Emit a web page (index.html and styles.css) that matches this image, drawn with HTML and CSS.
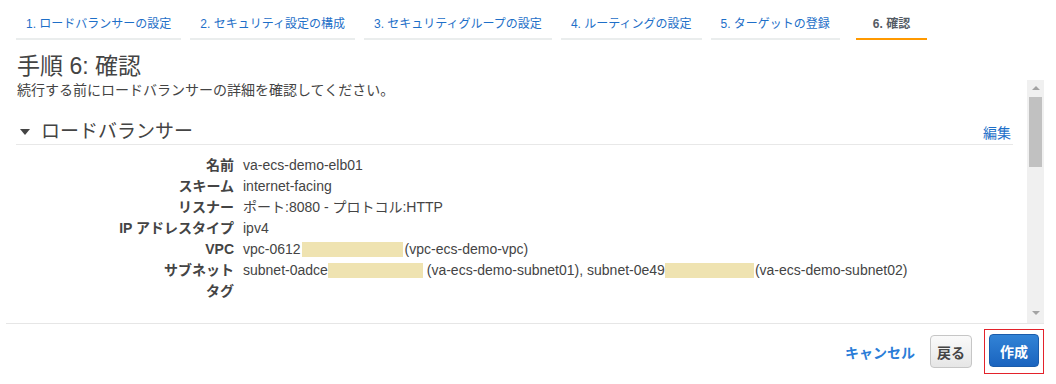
FILE: index.html
```html
<!DOCTYPE html>
<html lang="ja">
<head>
  <meta charset="UTF-8">
  <title>ロードバランサーの作成 - 確認</title>
  <link rel="stylesheet" href="styles.css">
</head>
<body>

  <ul class="steps">
    <li class="step">1. ロードバランサーの設定</li>
    <li class="step">2. セキュリティ設定の構成</li>
    <li class="step">3. セキュリティグループの設定</li>
    <li class="step">4. ルーティングの設定</li>
    <li class="step">5. ターゲットの登録</li>
    <li class="step active">6. 確認</li>
  </ul>

  <h1 class="page-title">手順 6: 確認</h1>

  <div class="review">
    <div class="review-body">
      <p class="lead">続行する前にロードバランサーの詳細を確認してください。</p>

      <div class="section">
        <div class="section-head">
          <span class="caret"></span>
          <span class="section-title">ロードバランサー</span>
          <a class="edit" href="#">編集</a>
        </div>

        <dl class="props">
          <dt>名前</dt>
          <dd>va-ecs-demo-elb01</dd>
          <dt>スキーム</dt>
          <dd>internet-facing</dd>
          <dt>リスナー</dt>
          <dd>ポート:8080 - プロトコル:HTTP</dd>
          <dt>IP アドレスタイプ</dt>
          <dd>ipv4</dd>
          <dt>VPC</dt>
          <dd>vpc-0612<span class="masked mask-vpc"></span>(vpc-ecs-demo-vpc)</dd>
          <dt>サブネット</dt>
          <dd>subnet-0adce<span class="masked mask-sub1"></span> (va-ecs-demo-subnet01), subnet-0e49<span class="masked mask-sub2"></span>(va-ecs-demo-subnet02)</dd>
          <dt>タグ</dt>
          <dd></dd>
        </dl>
      </div>
    </div>

    <div class="scrollbar">
      <span class="arrow up"></span>
      <span class="thumb"></span>
      <span class="arrow down"></span>
    </div>
  </div>

  <div class="actions">
    <a class="cancel" href="#">キャンセル</a>
    <button class="btn">戻る</button>
    <span class="highlight">
      <button class="btn primary">作成</button>
    </span>
  </div>

</body>
</html>
```

FILE: styles.css
```css
body {
  margin: 0;
  font-family: "Liberation Sans", "Noto Sans CJK JP", sans-serif;
  color: #444444;
  background-color: #ffffff;
}

/* ステップのタブ */
.steps {
  list-style: none;
  margin: 0;
  padding: 14px 0 0 16px;
  display: flex;
  gap: 9px;
}

.step {
  padding: 0 10px 4px;
  font-size: 12px;
  line-height: 20px;
  color: #1e6fc8;
  border-bottom: 2px solid #eaeded;
  white-space: nowrap;
}

.step.active {
  margin-left: 7px;
  padding: 0 17px 4px;
  color: #545b64;
  font-weight: bold;
  border-bottom-color: #ff9900;
}

.page-title {
  margin: 12px 0 0 17px;
  font-size: 23px;
  line-height: 28px;
  font-weight: normal;
  color: #444444;
}

/* スクロール領域 */
.review {
  display: flex;
  height: 243px;
  margin: 0 12px 0 6px;
  border-bottom: 1px solid #e6e6e6;
}

.review-body {
  flex: 1;
  padding: 0 14px 0 10px;
  overflow: hidden;
}

.lead {
  margin: 0 0 0 1px;
  font-size: 14px;
  line-height: 20px;
}

.section {
  margin-top: 20px;
}

.section-head {
  display: flex;
  align-items: center;
  height: 24px;
  padding-right: 2px;
  border-bottom: 1px solid #e8e8e8;
}

.caret {
  width: 0;
  height: 0;
  margin: 0 11px 0 4px;
  border-left: 5px solid transparent;
  border-right: 5px solid transparent;
  border-top: 6px solid #444444;
}

.section-title {
  flex: 1;
  font-size: 19px;
  line-height: 24px;
}

.edit {
  font-size: 14px;
  color: #1e6fc8;
  text-decoration: none;
}

.props {
  display: grid;
  grid-template-columns: 218px 1fr;
  column-gap: 9px;
  margin: 0;
  padding-top: 10px;
  font-size: 14px;
  line-height: 21px;
}

.props dt {
  text-align: right;
  font-weight: bold;
  white-space: nowrap;
}

.props dd {
  margin: 0;
  white-space: nowrap;
  min-height: 21px;
}

.masked {
  display: inline-block;
  height: 15px;
  vertical-align: -3px;
  background-color: #efe3b1;
}

.mask-vpc { width: 101px; margin-left: 1px; margin-right: 2px; }
.mask-sub1 { width: 95px; }
.mask-sub2 { width: 89px; margin-right: 1px; }

.scrollbar {
  width: 17px;
  background-color: #f0f0f0;
  display: flex;
  flex-direction: column;
  align-items: center;
}

.thumb {
  width: 13px;
  height: 70px;
  background-color: #c1c1c1;
}

.arrow {
  width: 0;
  height: 0;
  border-left: 4px solid transparent;
  border-right: 4px solid transparent;
}

.arrow.up {
  margin: 6px 0 7px;
  border-bottom: 4px solid #a3a3a3;
}

.arrow.down {
  margin-top: auto;
  margin-bottom: 8px;
  border-top: 4px solid #a3a3a3;
}

/* ボタン */
.actions {
  display: flex;
  justify-content: flex-end;
  align-items: center;
  padding: 5px 12px 0 0;
}

.cancel {
  margin-right: 15px;
  font-size: 14px;
  font-weight: bold;
  color: #2a7dd8;
  text-decoration: none;
}

.btn {
  height: 33px;
  padding: 0 6px;
  font-family: inherit;
  font-size: 14px;
  font-weight: bold;
  color: #444444;
  background: linear-gradient(#fafafa, #e6e6e6);
  border: 1px solid #c6c6c6;
  border-radius: 4px;
}

.highlight {
  margin-left: 12px;
  padding: 4px 4px 6px;
  border: 1px solid #e3222b;
}

.btn.primary {
  width: 50px;
  color: #ffffff;
  background: linear-gradient(#3283d6, #1a64bf);
  border-color: #1a5cab;
}
```
